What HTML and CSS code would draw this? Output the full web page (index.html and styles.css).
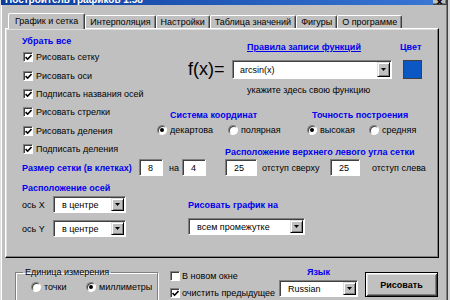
FILE: index.html
```html
<!DOCTYPE html>
<html lang="ru">
<head>
<meta charset="utf-8">
<title>Построитель графиков 1.58</title>
<link rel="stylesheet" href="styles.css">
</head>
<body>
<div class="window">
  <div class="titlebar">
    <span class="title">Построитель графиков 1.58</span>
    <span class="close">×</span>
  </div>
  <div class="client">
    <div class="tabs">
      <div class="tab active">График и сетка</div>
      <div class="tab">Интерполяция</div>
      <div class="tab">Настройки</div>
      <div class="tab">Таблица значений</div>
      <div class="tab">Фигуры</div>
      <div class="tab">О программе</div>
    </div>
    <div class="panel">
      <div class="sec1">
        <div class="col-checks">
          <div class="hd">Убрать все</div>
          <label class="row"><span class="cb"><svg width="7" height="7" viewBox="0 0 7 7"><path d="M0.6 3.1 L2.6 5.2 L6.5 1.1" fill="none" stroke="#000" stroke-width="1.6"/></svg></span>Рисовать сетку</label>
          <label class="row"><span class="cb"><svg width="7" height="7" viewBox="0 0 7 7"><path d="M0.6 3.1 L2.6 5.2 L6.5 1.1" fill="none" stroke="#000" stroke-width="1.6"/></svg></span>Рисовать оси</label>
          <label class="row"><span class="cb"><svg width="7" height="7" viewBox="0 0 7 7"><path d="M0.6 3.1 L2.6 5.2 L6.5 1.1" fill="none" stroke="#000" stroke-width="1.6"/></svg></span>Подписать названия осей</label>
          <label class="row"><span class="cb"><svg width="7" height="7" viewBox="0 0 7 7"><path d="M0.6 3.1 L2.6 5.2 L6.5 1.1" fill="none" stroke="#000" stroke-width="1.6"/></svg></span>Рисовать стрелки</label>
          <label class="row"><span class="cb"><svg width="7" height="7" viewBox="0 0 7 7"><path d="M0.6 3.1 L2.6 5.2 L6.5 1.1" fill="none" stroke="#000" stroke-width="1.6"/></svg></span>Рисовать деления</label>
        </div>
        <div class="col-right">
          <div class="fhead"><span class="link">Правила записи функций</span><span class="hd">Цвет</span></div>
          <div class="frow">
            <span class="fx">f(x)=</span>
            <div class="combo wide"><span class="val">arcsin(x)</span><span class="dd"><svg width="5" height="3" viewBox="0 0 5 3"><polygon points="0,0 5,0 2.5,3" fill="#000"/></svg></span></div>
            <span class="swatch"></span>
          </div>
          <div class="hint">укажите здесь свою функцию</div>
          <div class="radios">
            <div class="rgroup g1">
              <div class="hd">Система координат</div>
              <div class="ropts">
                <label class="opt o1"><span class="rb on"></span>декартова</label>
                <label class="opt"><span class="rb"></span>полярная</label>
              </div>
            </div>
            <div class="rgroup g2">
              <div class="hd">Точность построения</div>
              <div class="ropts">
                <label class="opt o1"><span class="rb on"></span>высокая</label>
                <label class="opt"><span class="rb"></span>средняя</label>
              </div>
            </div>
          </div>
        </div>
      </div>
      <div class="sec2">
        <label class="row"><span class="cb"><svg width="7" height="7" viewBox="0 0 7 7"><path d="M0.6 3.1 L2.6 5.2 L6.5 1.1" fill="none" stroke="#000" stroke-width="1.6"/></svg></span>Подписать деления</label>
        <div class="hd corner-hd">Расположение верхнего левого угла сетки</div>
        <div class="size-row">
          <span class="hd size-hd">Размер сетки (в клетках)</span>
          <span class="tb w24">8</span>
          <span class="na">на</span>
          <span class="tb w24">4</span>
        </div>
        <div class="corner-row">
          <span class="tb w32">25</span>
          <span class="lbl l1">отступ сверху</span>
          <span class="tb w30">25</span>
          <span class="lbl l2">отступ слева</span>
        </div>
      </div>
      <div class="sec3">
        <div class="axes">
          <div class="hd">Расположение осей</div>
          <div class="axrow">
            <span class="axl">ось X</span>
            <div class="combo ax"><span class="val">в центре</span><span class="dd"><svg width="5" height="3" viewBox="0 0 5 3"><polygon points="0,0 5,0 2.5,3" fill="#000"/></svg></span></div>
          </div>
          <div class="axrow y">
            <span class="axl">ось Y</span>
            <div class="combo ax"><span class="val">в центре</span><span class="dd"><svg width="5" height="3" viewBox="0 0 5 3"><polygon points="0,0 5,0 2.5,3" fill="#000"/></svg></span></div>
          </div>
        </div>
        <div class="drawon">
          <div class="hd">Рисовать график на</div>
          <div class="combo range"><span class="val">всем промежутке</span><span class="dd"><svg width="5" height="3" viewBox="0 0 5 3"><polygon points="0,0 5,0 2.5,3" fill="#000"/></svg></span></div>
        </div>
      </div>
    </div>
    <div class="bottom">
      <fieldset class="units">
        <legend>Единица измерения</legend>
        <div class="uopts">
          <label class="opt o1"><span class="rb"></span>точки</label>
          <label class="opt"><span class="rb on"></span>миллиметры</label>
        </div>
      </fieldset>
      <div class="bchecks">
        <label class="row"><span class="cb"></span>В новом окне</label>
        <label class="row"><span class="cb"><svg width="7" height="7" viewBox="0 0 7 7"><path d="M0.6 3.1 L2.6 5.2 L6.5 1.1" fill="none" stroke="#000" stroke-width="1.6"/></svg></span>очистить предыдущее</label>
      </div>
      <div class="lang">
        <div class="hd">Язык</div>
        <div class="combo lang-sel"><span class="val">Russian</span><span class="dd"><svg width="5" height="3" viewBox="0 0 5 3"><polygon points="0,0 5,0 2.5,3" fill="#000"/></svg></span></div>
      </div>
      <button class="draw">Рисовать</button>
    </div>
  </div>
</div>
</body>
</html>
```
FILE: styles.css
```css
* { box-sizing: border-box; }
html, body { margin: 0; padding: 0; }
body {
  width: 450px; height: 300px; overflow: hidden;
  background: #d4d4d4;
  font-family: "Liberation Sans", Arial, sans-serif;
  font-size: 9px; color: #000;
}
.window {
  width: 448px; height: 300px; overflow: hidden;
  background: #c0c0c0;
  border-left: 1px solid #dfdfdf;
  border-right: 1px solid #404040;
  box-shadow: inset 1px 0 #fff, inset -1px 0 #808080;
}
.titlebar {
  height: 5px; overflow: hidden;
  display: flex; justify-content: space-between; align-items: flex-start;
  background: linear-gradient(to right, #0b3c9e, #3a78d6);
}
.title {
  color: #fff; font-weight: bold; font-size: 10px; line-height: 10px;
  margin-top: -5px; margin-left: 4px; white-space: nowrap;
}
.close {
  width: 14px; height: 5px; overflow: hidden;
  background: #c0c0c0;
  border-right: 1px solid #404040; border-bottom: 1px solid #404040;
  box-shadow: inset -1px -1px #808080;
  font-size: 12px; font-weight: bold; line-height: 4px;
  text-align: center; color: #000;
}
.client { padding-left: 4px; }
.tabs {
  display: flex; align-items: flex-end;
  height: 15px; margin-top: 8px; padding-left: 3px;
}
.tab {
  height: 13px; padding: 0 4px; line-height: 12px;
  background: #c0c0c0;
  border-top: 1px solid #fff; border-left: 1px solid #fff;
  border-right: 1px solid #404040;
  box-shadow: inset -1px 0 #808080;
  border-radius: 2px 2px 0 0;
  white-space: nowrap;
}
.tab.active {
  height: 16px; margin-bottom: -1px; padding: 0 6px;
  line-height: 14px; position: relative; z-index: 1;
}
.panel {
  width: 434px; height: 230px;
  background: #c0c0c0;
  border-top: 1px solid #fff; border-left: 1px solid #fff;
  border-right: 1px solid #000; border-bottom: 1px solid #000;
  box-shadow: inset -1px -1px #808080, inset 1px 1px #dfdfdf;
  padding: 6px 0 0 16px;
}
.hd { font-weight: bold; color: #0000ee; line-height: 12px; white-space: nowrap; }
.link { font-weight: bold; color: #0000ee; text-decoration: underline; line-height: 12px; white-space: nowrap; }

.sec1 { display: flex; height: 105px; }
.col-checks { width: 135px; }
.col-checks .hd { margin-bottom: 1px; }
.row { display: flex; align-items: center; height: 18.4px; white-space: nowrap; }
.cb {
  width: 10px; height: 10px; margin: 0 3px 0 1px; flex: none;
  background: #fff;
  border: 1px solid; border-color: #808080 #fff #fff #808080;
  box-shadow: inset 1px 1px #404040;
  display: flex; align-items: center; justify-content: center;
}
.cb svg { display: block; margin: 1px 0 0 1px; }
.rb {
  width: 10px; height: 10px; margin-right: 3px; flex: none;
  border-radius: 50%; background: #fff;
  border: 1px solid; border-color: #808080 #fff #fff #808080;
  box-shadow: inset 1px 1px #404040;
  display: flex; align-items: center; justify-content: center;
}
.rb.on::after {
  content: ""; width: 4px; height: 4px; border-radius: 50%; background: #000;
}
.col-right { flex: 1; padding-top: 6px; }
.fhead { display: grid; grid-template-columns: 153px auto; padding-left: 90px; height: 12px; }
.frow { display: flex; align-items: center; height: 19px; margin-top: 7px; padding-left: 31px; }
.fx { width: 44px; font-size: 18px; line-height: 19px; white-space: nowrap; }
.combo {
  display: flex; align-items: stretch;
  height: 17px; padding: 1px;
  background: #fff;
  border: 1px solid; border-color: #808080 #fff #fff #808080;
  box-shadow: inset 1px 1px #404040;
}
.combo .val { flex: 1; padding-left: 7px; display: flex; align-items: center; white-space: nowrap; overflow: hidden; }
.combo .dd {
  width: 13px; flex: none;
  background: #c0c0c0;
  border: 1px solid; border-color: #dfdfdf #000 #000 #dfdfdf;
  box-shadow: inset 1px 1px #fff, inset -1px -1px #808080;
  display: flex; align-items: center; justify-content: center;
}
.combo .dd svg { display: block; }
.combo.wide { width: 160px; height: 19px; }
.combo.wide .val { padding-left: 6px; }
.swatch { width: 19px; height: 19px; margin-left: 11px; background: #0b57c4; border: 1px solid #404040; }
.hint { margin-top: 5px; line-height: 12px; padding-left: 90px; white-space: nowrap; }
.radios { display: flex; margin-top: 13px; }
.g1 { width: 150px; }
.g1 .hd { margin-left: 13px; }
.g2 .hd { margin-left: 5px; }
.ropts { display: flex; align-items: center; height: 14px; margin-top: 2px; }
.opt { display: flex; align-items: center; white-space: nowrap; }
.g1 .o1 { width: 71px; }
.g2 .o1 { width: 62px; }

.sec2 { display: grid; grid-template-columns: 203px auto; grid-template-rows: 18.4px 19px; }
.corner-hd { align-self: end; }
.size-row, .corner-row { display: flex; align-items: center; }
.size-hd { width: 117px; }
.tb {
  height: 17px; padding-left: 8px;
  background: #fff;
  border: 1px solid; border-color: #808080 #fff #fff #808080;
  box-shadow: inset 1px 1px #404040;
  display: flex; align-items: center;
}
.w24 { width: 24px; }
.w32 { width: 32px; }
.w30 { width: 30px; }
.na { margin-left: 6px; width: 13px; }
.lbl { white-space: nowrap; }
.l1 { margin-left: 5px; width: 68px; }
.l2 { margin-left: 12px; }

.sec3 { display: flex; }
.axes { width: 166px; padding-top: 5px; }
.axrow { display: flex; align-items: center; height: 17px; margin-top: 2px; }
.axrow.y { margin-top: 7px; }
.axl { width: 31px; white-space: nowrap; }
.combo.ax { width: 73px; }
.drawon { padding-top: 22px; }
.combo.range { width: 117px; margin-top: 7px; }

.bottom { display: flex; align-items: flex-start; height: 42px; overflow: hidden; }
.units {
  margin: 8px 0 0 10px; width: 143px; height: 40px; min-width: 0;
  padding: 0;
  border: 1px solid #808080;
  box-shadow: inset 1px 1px #fff, 1px 1px #fff;
}
.units legend { margin-left: 7px; padding: 0 2px; line-height: 12px; }
.uopts { display: flex; align-items: center; height: 14px; margin-top: 2px; padding-left: 15px; }
.uopts .o1 { width: 55px; }
.bchecks { margin: 9px 0 0 12px; width: 109px; }
.bchecks .row { height: 17px; }
.bchecks .cb { margin: 0 2px 0 0; }
.lang { width: 79px; margin: 8px 0 0 0; text-align: center; }
.lang .combo { margin-top: 2px; text-align: left; }
.draw {
  margin: 14px 0 0 7px; width: 73px; height: 25px; padding: 0;
  background: #c0c0c0;
  font-family: "Liberation Sans", Arial, sans-serif; font-size: 9px; font-weight: bold; color: #000;
  border: 1px solid #000;
  box-shadow: inset 1px 1px #fff, inset -1px -1px #404040, inset 2px 2px #dfdfdf, inset -2px -2px #808080;
}
```
